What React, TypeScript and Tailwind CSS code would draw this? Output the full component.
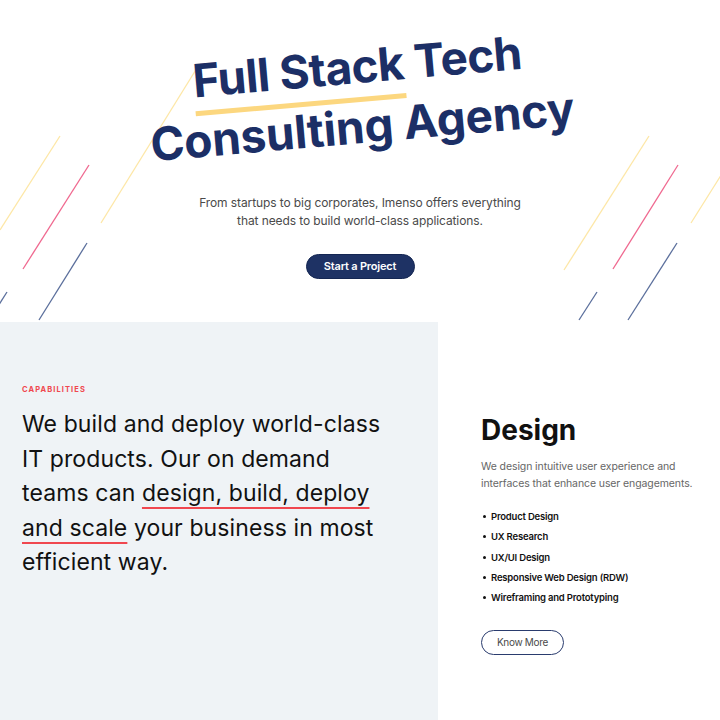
import React from "react";

const lines: { x1: number; y1: number; x2: number; y2: number; c: string }[] = [
  { x1: 60, y1: 136, x2: 0, y2: 230, c: "#fde7a6" },
  { x1: 89, y1: 165, x2: 23, y2: 269, c: "#f0688f" },
  { x1: 87, y1: 243, x2: 39, y2: 320, c: "#5b6f9c" },
  { x1: 7, y1: 292, x2: -5, y2: 311, c: "#5b6f9c" },
  { x1: 197, y1: 68, x2: 101, y2: 223, c: "#fde7a6" },
  { x1: 649, y1: 136, x2: 564, y2: 270, c: "#fde7a6" },
  { x1: 678, y1: 165, x2: 613, y2: 269, c: "#f0688f" },
  { x1: 730, y1: 161, x2: 691, y2: 223, c: "#fde7a6" },
  { x1: 677, y1: 243, x2: 628, y2: 320, c: "#5b6f9c" },
  { x1: 597, y1: 292, x2: 579, y2: 320, c: "#5b6f9c" },
];

const items = [
  "Product Design",
  "UX Research",
  "UX/UI Design",
  "Responsive Web Design (RDW)",
  "Wireframing and Prototyping",
];

export default function App() {
  return (
    <div className="w-[720px] h-[720px] overflow-hidden bg-white font-['Inter',sans-serif]">
      <section className="relative h-[322px] flex flex-col items-center">
        <svg
          className="absolute inset-0 pointer-events-none"
          width="720"
          height="322"
          viewBox="0 0 720 322"
        >
          {lines.map((l, i) => (
            <line key={i} x1={l.x1} y1={l.y1} x2={l.x2} y2={l.y2} stroke={l.c} strokeWidth="1.3" />
          ))}
        </svg>
        <h1 className="relative mt-[36px] text-center text-[46px] leading-[60px] font-bold tracking-[-0.6px] text-[#1c2f66] -rotate-[5deg]">
          <span className="underline decoration-[#fcd77f] decoration-[5px] underline-offset-[14px] [text-decoration-skip-ink:none]">
            Full Stack
          </span>{" "}
          Tech
          <br />
          <span className="tracking-[-0.2px]">Consulting Agency</span>
        </h1>
        <p className="relative mt-[38px] text-center text-[12px] leading-[18px] tracking-[-0.1px] text-[#4a4a4a]">
          From startups to big corporates, Imenso offers everything
          <br />
          that needs to build world-class applications.
        </p>
        <button className="relative mt-[24px] h-[25px] w-[109px] rounded-full bg-[#1e3264] border border-[#142652] text-white text-[11px] font-semibold tracking-[-0.2px]">
          Start a Project
        </button>
      </section>
      <section className="flex h-[398px]">
        <div className="w-[438px] bg-[#eff3f6] pl-[22px] pt-[63px]">
          <div className="text-[7.5px] font-bold tracking-[1.1px] text-[#f0474f] leading-[10px]">CAPABILITIES</div>
          <p className="mt-[12px] text-[23px] leading-[34.5px] tracking-[0.1px] text-[#111111] whitespace-nowrap">
            We build and deploy world-class
            <br />
            IT products. Our on demand
            <br />
            teams can{" "}
            <span className="underline decoration-[#f0474f] decoration-[1.5px] underline-offset-[6px]">
              design, build, deploy
              <br />
              and scale
            </span>{" "}
            your business in most
            <br />
            efficient way.
          </p>
        </div>
        <div className="flex-1 pl-[43px] pt-[88px]">
          <h2 className="text-[28px] leading-[40px] font-bold text-[#111111]">Design</h2>
          <p className="mt-[9px] text-[10.5px] leading-[16.5px] tracking-[-0.1px] text-[#666666]">
            We design intuitive user experience and
            <br />
            interfaces that enhance user engagements.
          </p>
          <ul className="mt-[18px] flex flex-col gap-[7px]">
            {items.map((t) => (
              <li key={t} className="flex items-center text-[9.5px] leading-[13.25px] font-semibold tracking-[-0.2px] text-[#111111]">
                <span className="w-[3px] h-[3px] rounded-full bg-[#111111] ml-[2px] mr-[5px]" />
                {t}
              </li>
            ))}
          </ul>
          <button className="mt-[26px] h-[25px] w-[83px] rounded-full border-[1.5px] border-[#2a3c6e] text-[10px] tracking-[-0.3px] text-[#4a4a4a]">
            Know More
          </button>
        </div>
      </section>
    </div>
  );
}
